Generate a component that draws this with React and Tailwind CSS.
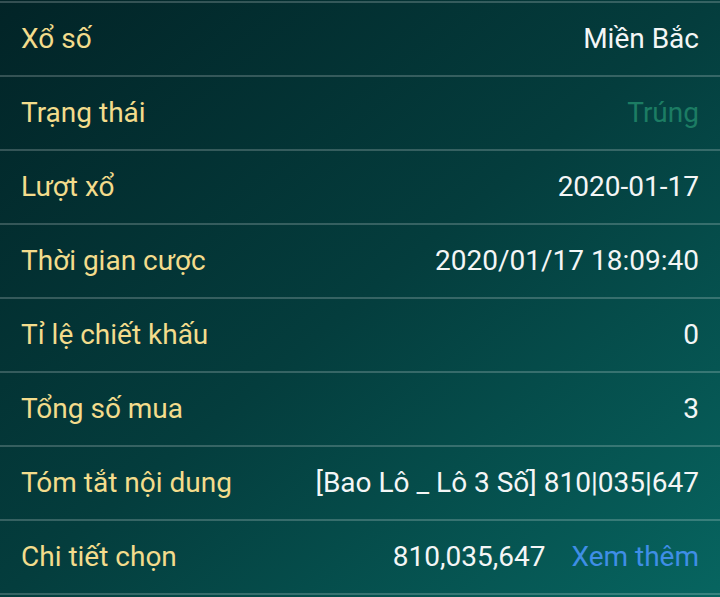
import React from "react";

const rows = [
  { label: "Xổ số", value: "Miền Bắc" },
  { label: "Trạng thái", value: "Trúng", tone: "win" },
  { label: "Lượt xổ", value: "2020-01-17" },
  { label: "Thời gian cược", value: "2020/01/17 18:09:40" },
  { label: "Tỉ lệ chiết khấu", value: "0" },
  { label: "Tổng số mua", value: "3" },
  { label: "Tóm tắt nội dung", value: "[Bao Lô _ Lô 3 Số] 810|035|647" },
  { label: "Chi tiết chọn", value: "810,035,647", more: true },
];

export default function App() {
  return (
    <div
      className="w-[720px] h-[597px] overflow-hidden bg-linear-to-br from-[#022427] via-[#043d3d] to-[#076560] pt-px"
      style={{ fontFamily: "Roboto, 'Noto Sans', sans-serif" }}
    >
      <div className="border-t-2 border-white/20">
        {rows.map((r) => (
          <div
            key={r.label}
            className="flex items-center justify-between h-[74px] px-[21px] border-b-2 border-white/20 text-[28px]"
          >
            <span className="text-[#f3dc8c]">{r.label}</span>
            <div className="flex items-center gap-[26px]">
              <span
                className={
                  r.tone === "win" ? "text-[#1c7c63]" : "text-[#f4f6f6]"
                }
              >
                {r.value}
              </span>
              {r.more && <span className="text-[#3f8ee6]">Xem thêm</span>}
            </div>
          </div>
        ))}
      </div>
    </div>
  );
}
